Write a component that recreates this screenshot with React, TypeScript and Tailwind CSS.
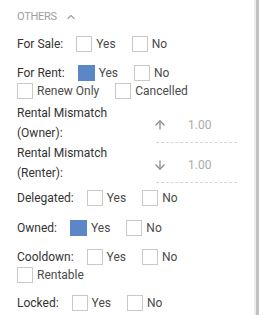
import { ChevronUp, ArrowUp, ArrowDown } from "lucide-react";

type Opt = { label: string; checked?: boolean };

function Box({ opt, last }: { opt: Opt; last?: boolean }) {
  return (
    <div className={`flex items-center h-[18px] ${last ? "" : "mr-[16px]"}`}>
      <span
        className={
          opt.checked
            ? "w-[17px] h-[16px] bg-[#5b87c6]"
            : "w-[16px] h-[16px] border border-[#c9c9c9] bg-white"
        }
      />
      <span className="ml-[4px] text-[#4a4a4a]">{opt.label}</span>
    </div>
  );
}

function CheckRow({
  label,
  opts,
  extra,
  className,
}: {
  label: string;
  opts: Opt[];
  extra?: Opt[];
  className?: string;
}) {
  return (
    <div className={`flex flex-wrap items-center ${className ?? ""}`}>
      <span className="h-[18px] leading-[18px] mr-[13px] text-[#333]">{label}</span>
      {opts.map((o, i) => (
        <Box key={o.label} opt={o} last={i === opts.length - 1 && !extra} />
      ))}
      {extra && <div className="basis-full h-0" />}
      {extra?.map((o) => <Box key={o.label} opt={o} />)}
    </div>
  );
}

function MismatchRow({ who, up }: { who: string; up?: boolean }) {
  const Icon = up ? ArrowUp : ArrowDown;
  return (
    <div className="flex items-end h-[40px]">
      <div className="w-[139px] leading-[20px] text-[#333]">
        <div>Rental Mismatch</div>
        <div>({who}):</div>
      </div>
      <div className="flex items-center w-[81px] h-[27px] pb-[8px] border-b border-dashed border-[#d6d6d6]">
        <Icon size={14} strokeWidth={2.2} className="text-[#8a8a8a] ml-[-3px]" />
        <span className="ml-[21px] text-[#ababab]">1.00</span>
      </div>
    </div>
  );
}

export default function App() {
  return (
    <div
      className="flex w-[259px] h-[315px] bg-white text-[12px] overflow-hidden"
      style={{ fontFamily: "Roboto, 'Noto Sans', sans-serif" }}
    >
      <div className="flex-1 pl-[17px] pt-[9px]">
        <div className="flex items-center h-[16px] text-[11px] text-[#9e9e9e] tracking-tight">
          OTHERS
          <ChevronUp size={12} strokeWidth={2.2} className="ml-[8px] text-[#9e9e9e]" />
        </div>

        <CheckRow
          className="mt-[10px]"
          label="For Sale:"
          opts={[{ label: "Yes" }, { label: "No" }]}
        />
        <CheckRow
          className="mt-[11px]"
          label="For Rent:"
          opts={[{ label: "Yes", checked: true }, { label: "No" }]}
          extra={[{ label: "Renew Only" }, { label: "Cancelled" }]}
        />

        <div className="mt-[3px]">
          <MismatchRow who="Owner" up />
          <MismatchRow who="Renter" />
        </div>

        <CheckRow
          className="mt-[6px]"
          label="Delegated:"
          opts={[{ label: "Yes" }, { label: "No" }]}
        />
        <CheckRow
          className="mt-[12px]"
          label="Owned:"
          opts={[{ label: "Yes", checked: true }, { label: "No" }]}
        />
        <CheckRow
          className="mt-[11px]"
          label="Cooldown:"
          opts={[{ label: "Yes" }, { label: "No" }]}
          extra={[{ label: "Rentable" }]}
        />
        <CheckRow
          className="mt-[10px]"
          label="Locked:"
          opts={[{ label: "Yes" }, { label: "No" }]}
        />
      </div>
      <div className="w-[2px] h-full bg-[#ececec]" />
      <div className="w-[3px] h-full bg-[#c1c1c1]" />
    </div>
  );
}
